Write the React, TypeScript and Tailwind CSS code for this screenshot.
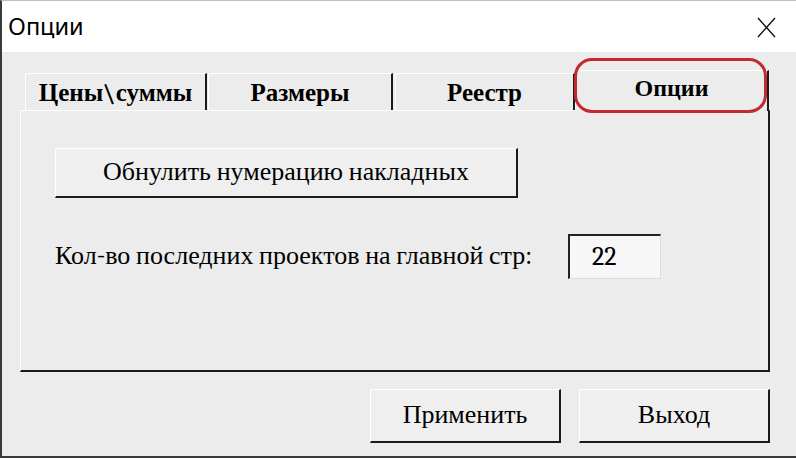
import React from "react";

function Tab({ label, w, selected }: { label: string; w: string; selected?: boolean }) {
  if (selected) {
    return (
      <div
        className={`relative z-10 -mb-[1px] h-[41px] ${w} flex justify-center border-t border-l border-white border-r-2 border-r-[#1a1a1a] bg-[#ececec] pt-[4px]`}
      >
        <span className="text-[24px] font-bold leading-[26px] text-black">{label}</span>
        <div className="pointer-events-none absolute left-[-2px] top-[-13px] h-[55px] w-[193px] rounded-[18px] border-[3px] border-[#c32a2f]" />
      </div>
    );
  }
  return (
    <div
      className={`h-[37px] ${w} flex justify-center border-t border-l border-white border-r-2 border-r-[#1a1a1a] bg-[#ececec] pt-[6px]`}
    >
      <span className="text-[25px] font-bold leading-[26px] text-black">{label}</span>
    </div>
  );
}

function Btn({ children, className }: { children: React.ReactNode; className: string }) {
  return (
    <div
      className={`${className} flex items-center justify-center border-t border-l border-white border-r-2 border-b-2 border-r-[#1a1a1a] border-b-[#1a1a1a] bg-[#efefef] text-[26px] text-black`}
    >
      {children}
    </div>
  );
}

export default function App() {
  return (
    <div className="font-serif w-[796px] h-[458px] overflow-hidden bg-[#ececec] border-l-2 border-b-2 border-[#3a3a3a] border-t border-t-[#bdbdbd] flex flex-col">
      <div className="h-[51px] bg-white flex items-center justify-between pl-[6px] pr-[20px] shrink-0">
        <span className="text-[23.5px] text-black leading-none font-['Noto_Sans']">Опции</span>
        <svg width="19" height="21" viewBox="0 0 19 21" className="mt-[1px]">
          <path d="M1 1 L18 20 M18 1 L1 20" stroke="#111" strokeWidth="1.4" fill="none" />
        </svg>
      </div>
      <div className="flex flex-col pl-[18px] pt-[18px]">
        <div className="flex items-end pl-[5px] h-[40px]">
          <Tab label="Цены\суммы" w="w-[182px]" />
          <div className="w-[1px]" />
          <Tab label="Размеры" w="w-[185px]" />
          <div className="w-[2px]" />
          <Tab label="Реестр" w="w-[180px]" />
          <Tab label="Опции" w="w-[194px]" selected />
        </div>
        <div className="w-[750px] h-[262px] border-t border-l border-white border-r-2 border-b-2 border-r-[#1a1a1a] border-b-[#1a1a1a] bg-[#ececec] flex flex-col pl-[34px] pt-[37px]">
          <Btn className="w-[463px] h-[50px]">Обнулить нумерацию накладных</Btn>
          <div className="flex items-center mt-[36px]">
            <span className="w-[513px] text-[26px] text-black whitespace-nowrap">
              Кол-во последних проектов на главной стр:
            </span>
            <div className="w-[93px] h-[45px] border-t-2 border-l-2 border-t-[#222] border-l-[#222] border-r border-b border-r-[#dcdcdc] border-b-[#dcdcdc] bg-[#f7f7f7] flex items-center pl-[22px] text-[26px] text-black">
              22
            </div>
          </div>
        </div>
        <div className="w-[750px] flex justify-end gap-[18px] mt-[17px]">
          <Btn className="w-[191px] h-[54px]">Применить</Btn>
          <Btn className="w-[191px] h-[54px]">Выход</Btn>
        </div>
      </div>
    </div>
  );
}
